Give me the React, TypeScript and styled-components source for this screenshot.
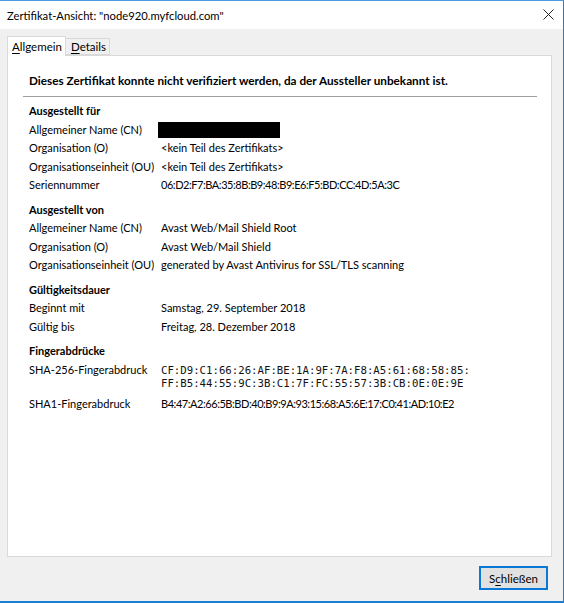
import React, { FC } from "react";
import styled, { createGlobalStyle } from "styled-components";

const GlobalStyle = createGlobalStyle`
  body {
    margin: 0;
    background: #ffffff;
    font-family: Lato, "Noto Sans", sans-serif;
    font-size: 11px;
    color: #000;
  }
`;

type Field = { label: string; value?: string; redacted?: boolean; mono?: string[]; hex?: boolean };
type Section = { title: string; fields: Field[] };

const sections: Section[] = [
  {
    title: "Ausgestellt für",
    fields: [
      { label: "Allgemeiner Name (CN)", redacted: true },
      { label: "Organisation (O)", value: "<kein Teil des Zertifikats>" },
      { label: "Organisationseinheit (OU)", value: "<kein Teil des Zertifikats>" },
      { label: "Seriennummer", value: "06:D2:F7:BA:35:8B:B9:48:B9:E6:F5:BD:CC:4D:5A:3C", hex: true },
    ],
  },
  {
    title: "Ausgestellt von",
    fields: [
      { label: "Allgemeiner Name (CN)", value: "Avast Web/Mail Shield Root" },
      { label: "Organisation (O)", value: "Avast Web/Mail Shield" },
      { label: "Organisationseinheit (OU)", value: "generated by Avast Antivirus for SSL/TLS scanning" },
    ],
  },
  {
    title: "Gültigkeitsdauer",
    fields: [
      { label: "Beginnt mit", value: "Samstag, 29. September 2018" },
      { label: "Gültig bis", value: "Freitag, 28. Dezember 2018" },
    ],
  },
  {
    title: "Fingerabdrücke",
    fields: [
      {
        label: "SHA-256-Fingerabdruck",
        mono: [
          "CF:D9:C1:66:26:AF:BE:1A:9F:7A:F8:A5:61:68:58:85:",
          "FF:B5:44:55:9C:3B:C1:7F:FC:55:57:3B:CB:0E:0E:9E",
        ],
      },
      {
        label: "SHA1-Fingerabdruck",
        value: "B4:47:A2:66:5B:BD:40:B9:9A:93:15:68:A5:6E:17:C0:41:AD:10:E2",
        hex: true,
      },
    ],
  },
];

const Window = styled.div`
  width: 564px;
  height: 603px;
  box-sizing: border-box;
  display: flex;
  flex-direction: column;
  border-top: 1px solid #4a9be0;
  border-right: 1px solid #1a7fd6;
  border-bottom: 2px solid #1a7fd6;
  background: #f0f0f0;
`;

const TitleBar = styled.div`
  height: 28px;
  flex: none;
  display: flex;
  align-items: center;
  justify-content: space-between;
  padding: 0 9px 0 7px;
  background: #ffffff;
  font-size: 11.25px;
  color: #000;
`;

const CloseIcon = styled.svg`
  width: 11px;
  height: 11px;
  margin-bottom: 1px;
`;

const Body = styled.div`
  flex: 1;
  display: flex;
  flex-direction: column;
  padding: 7px 11px 0 7px;
  min-height: 0;
`;

const TabRow = styled.div`
  display: flex;
  align-items: flex-end;
  height: 19px;
  position: relative;
  z-index: 1;
`;

const Tab = styled.div<{ $active?: boolean }>`
  box-sizing: border-box;
  height: ${(p) => (p.$active ? "20px" : "17px")};
  margin-bottom: ${(p) => (p.$active ? "-1px" : "0")};
  padding: ${(p) => (p.$active ? "0 3px 0 4px" : "0 3px 0 5px")};
  display: flex;
  align-items: center;
  border: 1px solid #d9d9d9;
  border-bottom: ${(p) => (p.$active ? "none" : "1px solid #d9d9d9")};
  border-left: ${(p) => (p.$active ? "1px solid #d9d9d9" : "none")};
  background: ${(p) => (p.$active ? "#ffffff" : "#f0f0f0")};
  font-size: 11.5px;
`;

const Key = styled.span`
  text-decoration: underline;
  text-underline-offset: 2px;
`;

const Panel = styled.div`
  flex: 1;
  background: #ffffff;
  border: 1px solid #d9d9d9;
  padding: 15px 14px 0 15px;
`;

const Warning = styled.div`
  padding-left: 6px;
  font-weight: 700;
  font-size: 11.75px;
  line-height: 18px;
  padding-top: 1px;
  padding-bottom: 6px;
  border-bottom: 1px solid #a0a0a0;
  margin-bottom: 5px;
`;

const SectionBox = styled.div`
  padding-left: 6px;
  margin-bottom: 6px;
`;

const SectionTitle = styled.div`
  font-weight: 700;
  line-height: 18.5px;
`;

const FieldRow = styled.div`
  display: grid;
  grid-template-columns: 132px 1fr;
  line-height: 18.5px;
  align-items: start;
`;

const Value = styled.div<{ $hex?: boolean }>`
  white-space: nowrap;
  letter-spacing: ${(p) => (p.$hex ? "-0.45px" : "normal")};
`;

const Redacted = styled.div`
  width: 122px;
  height: 16px;
  margin: 1px 0 0 -3px;
  background: #000;
`;

const MonoValue = styled.div`
  font-family: "DejaVu Sans Mono", "Liberation Mono", monospace;
  font-size: 10.7px;
  line-height: 13px;
  padding: 3px 0 5px;
  white-space: nowrap;
  color: #111;
`;

const Footer = styled.div`
  flex: none;
  display: flex;
  justify-content: flex-end;
  padding: 9px 4px 11px 0;
`;

const Button = styled.button`
  width: 69px;
  height: 24px;
  box-sizing: border-box;
  border: 2px solid #0a78d7;
  background: #e1e1e1;
  font-family: inherit;
  font-size: 11.5px;
  color: #000;
  padding: 0;
  cursor: default;
`;

const FieldLine: FC<{ field: Field }> = ({ field }) => (
  <FieldRow>
    <div>{field.label}</div>
    {field.redacted && <Redacted />}
    {field.value && <Value $hex={field.hex}>{field.value}</Value>}
    {field.mono && (
      <MonoValue>
        {field.mono.map((line) => (
          <div key={line}>{line}</div>
        ))}
      </MonoValue>
    )}
  </FieldRow>
);

const App: FC = () => {
  return (
    <>
      <GlobalStyle />
      <Window>
        <TitleBar>
          <span>Zertifikat-Ansicht: "node920.myfcloud.com"</span>
          <CloseIcon viewBox="0 0 11 11">
            <path d="M0.5 0.5 L10.5 10.5 M10.5 0.5 L0.5 10.5" stroke="#222" strokeWidth="1" fill="none" />
          </CloseIcon>
        </TitleBar>
        <Body>
          <TabRow>
            <Tab $active>
              <Key>A</Key>llgemein
            </Tab>
            <Tab>
              <Key>D</Key>etails
            </Tab>
          </TabRow>
          <Panel>
            <Warning>Dieses Zertifikat konnte nicht verifiziert werden, da der Aussteller unbekannt ist.</Warning>
            {sections.map((section) => (
              <SectionBox key={section.title}>
                <SectionTitle>{section.title}</SectionTitle>
                {section.fields.map((field) => (
                  <FieldLine key={field.label} field={field} />
                ))}
              </SectionBox>
            ))}
          </Panel>
          <Footer>
            <Button>
              S<Key>c</Key>hließen
            </Button>
          </Footer>
        </Body>
      </Window>
    </>
  );
};

export default App;
